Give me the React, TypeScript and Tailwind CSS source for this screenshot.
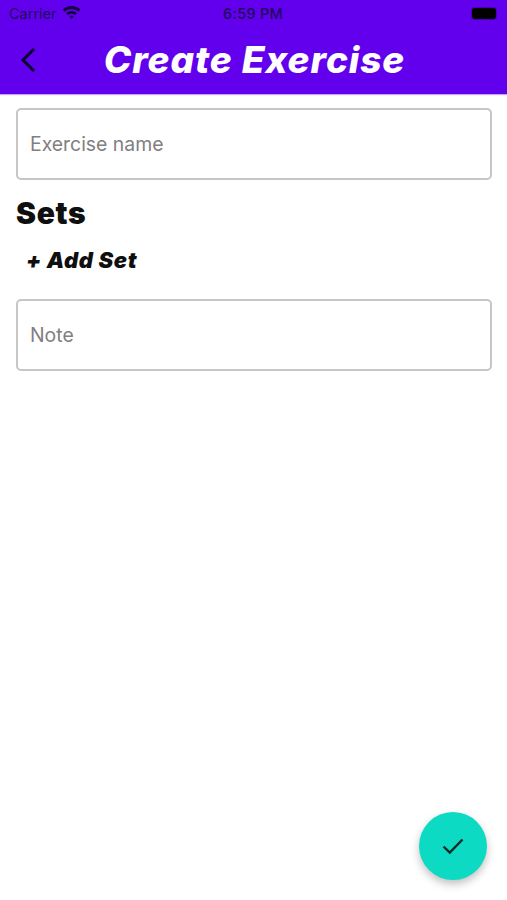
import React from 'react';

const Field: React.FC<{ label: string }> = ({ label }) => (
  <div className="h-[72px] rounded-[5px] border-2 border-[#c6c6c6] flex items-center pl-[12px] pt-[1px] text-[19.4px] text-[#808080]">{label}</div>
);

const StatusBar: React.FC = () => (
  <div className="h-[27px] flex items-center justify-between pl-[9px] pr-[11px] text-[#1f0a5c] text-[14.5px] relative">
    <div className="flex items-center gap-[5px]">
      <span>Carrier</span>
      <svg width="19" height="14" viewBox="0 0 19 14" className="mb-[3px]">
        <path d="M0.5 4.6 A13 13 0 0 1 18.5 4.6 L16.4 6.8 A10 10 0 0 0 2.6 6.8 Z" fill="#14063f" />
        <path d="M4 8.1 A8 8 0 0 1 15 8.1 L12.9 10.2 A5 5 0 0 0 6.1 10.2 Z" fill="#14063f" />
        <path d="M7.4 11.5 A3 3 0 0 1 11.6 11.5 L9.5 13.7 Z" fill="#14063f" />
      </svg>
    </div>
    <span className="absolute left-[223px] font-medium tracking-[0.3px]">6:59 PM</span>
    <div className="w-[24px] h-[11px] rounded-[3px] bg-black mb-[1px] ring-1 ring-[#4a00b0]" />
  </div>
);

export default function App() {
  return (
    <div className="relative h-[900px] w-full bg-white overflow-hidden font-['Inter',sans-serif]">
      <header className="h-[94px] bg-[#6200ee] shadow-[0_1px_1px_rgba(98,0,238,0.35)]">
        <StatusBar />
        <div className="h-[67px] relative flex items-center justify-center">
          <svg width="18" height="28" viewBox="0 0 18 28" fill="none" stroke="#0b0330" strokeWidth="3" className="absolute left-[19px] top-[19px]">
            <path d="M15 3 L4 14 L15 25" />
          </svg>
          <h1 className="text-[37px] font-extrabold italic text-white leading-none mb-[2px] ml-[2px] tracking-[0.9px]">Create Exercise</h1>
        </div>
      </header>
      <main className="px-4 pt-[14px] pr-[15px]">
        <Field label="Exercise name" />
        <h2 className="text-[30px] font-black text-[#0f0f0f] leading-[34px] mt-4 tracking-[0.7px]">Sets</h2>
        <button className="block ml-[10px] mt-[17px] text-[22px] font-black italic text-[#0f0f0f] leading-[26px] tracking-[0.6px]">+ Add Set</button>
        <div className="mt-[26px]">
          <Field label="Note" />
        </div>
      </main>
      <button className="absolute left-[419px] top-[812px] w-[68px] h-[68px] rounded-full bg-[#0cdac2] flex items-center justify-center shadow-[0_4px_8px_rgba(0,0,0,0.25)]">
        <svg width="24" height="20" viewBox="0 0 24 20" fill="none" stroke="#0c2a2a" strokeWidth="2.4">
          <path d="M2.5 10.5 L8.8 16.5 L21.5 3.5" />
        </svg>
      </button>
    </div>
  );
}
